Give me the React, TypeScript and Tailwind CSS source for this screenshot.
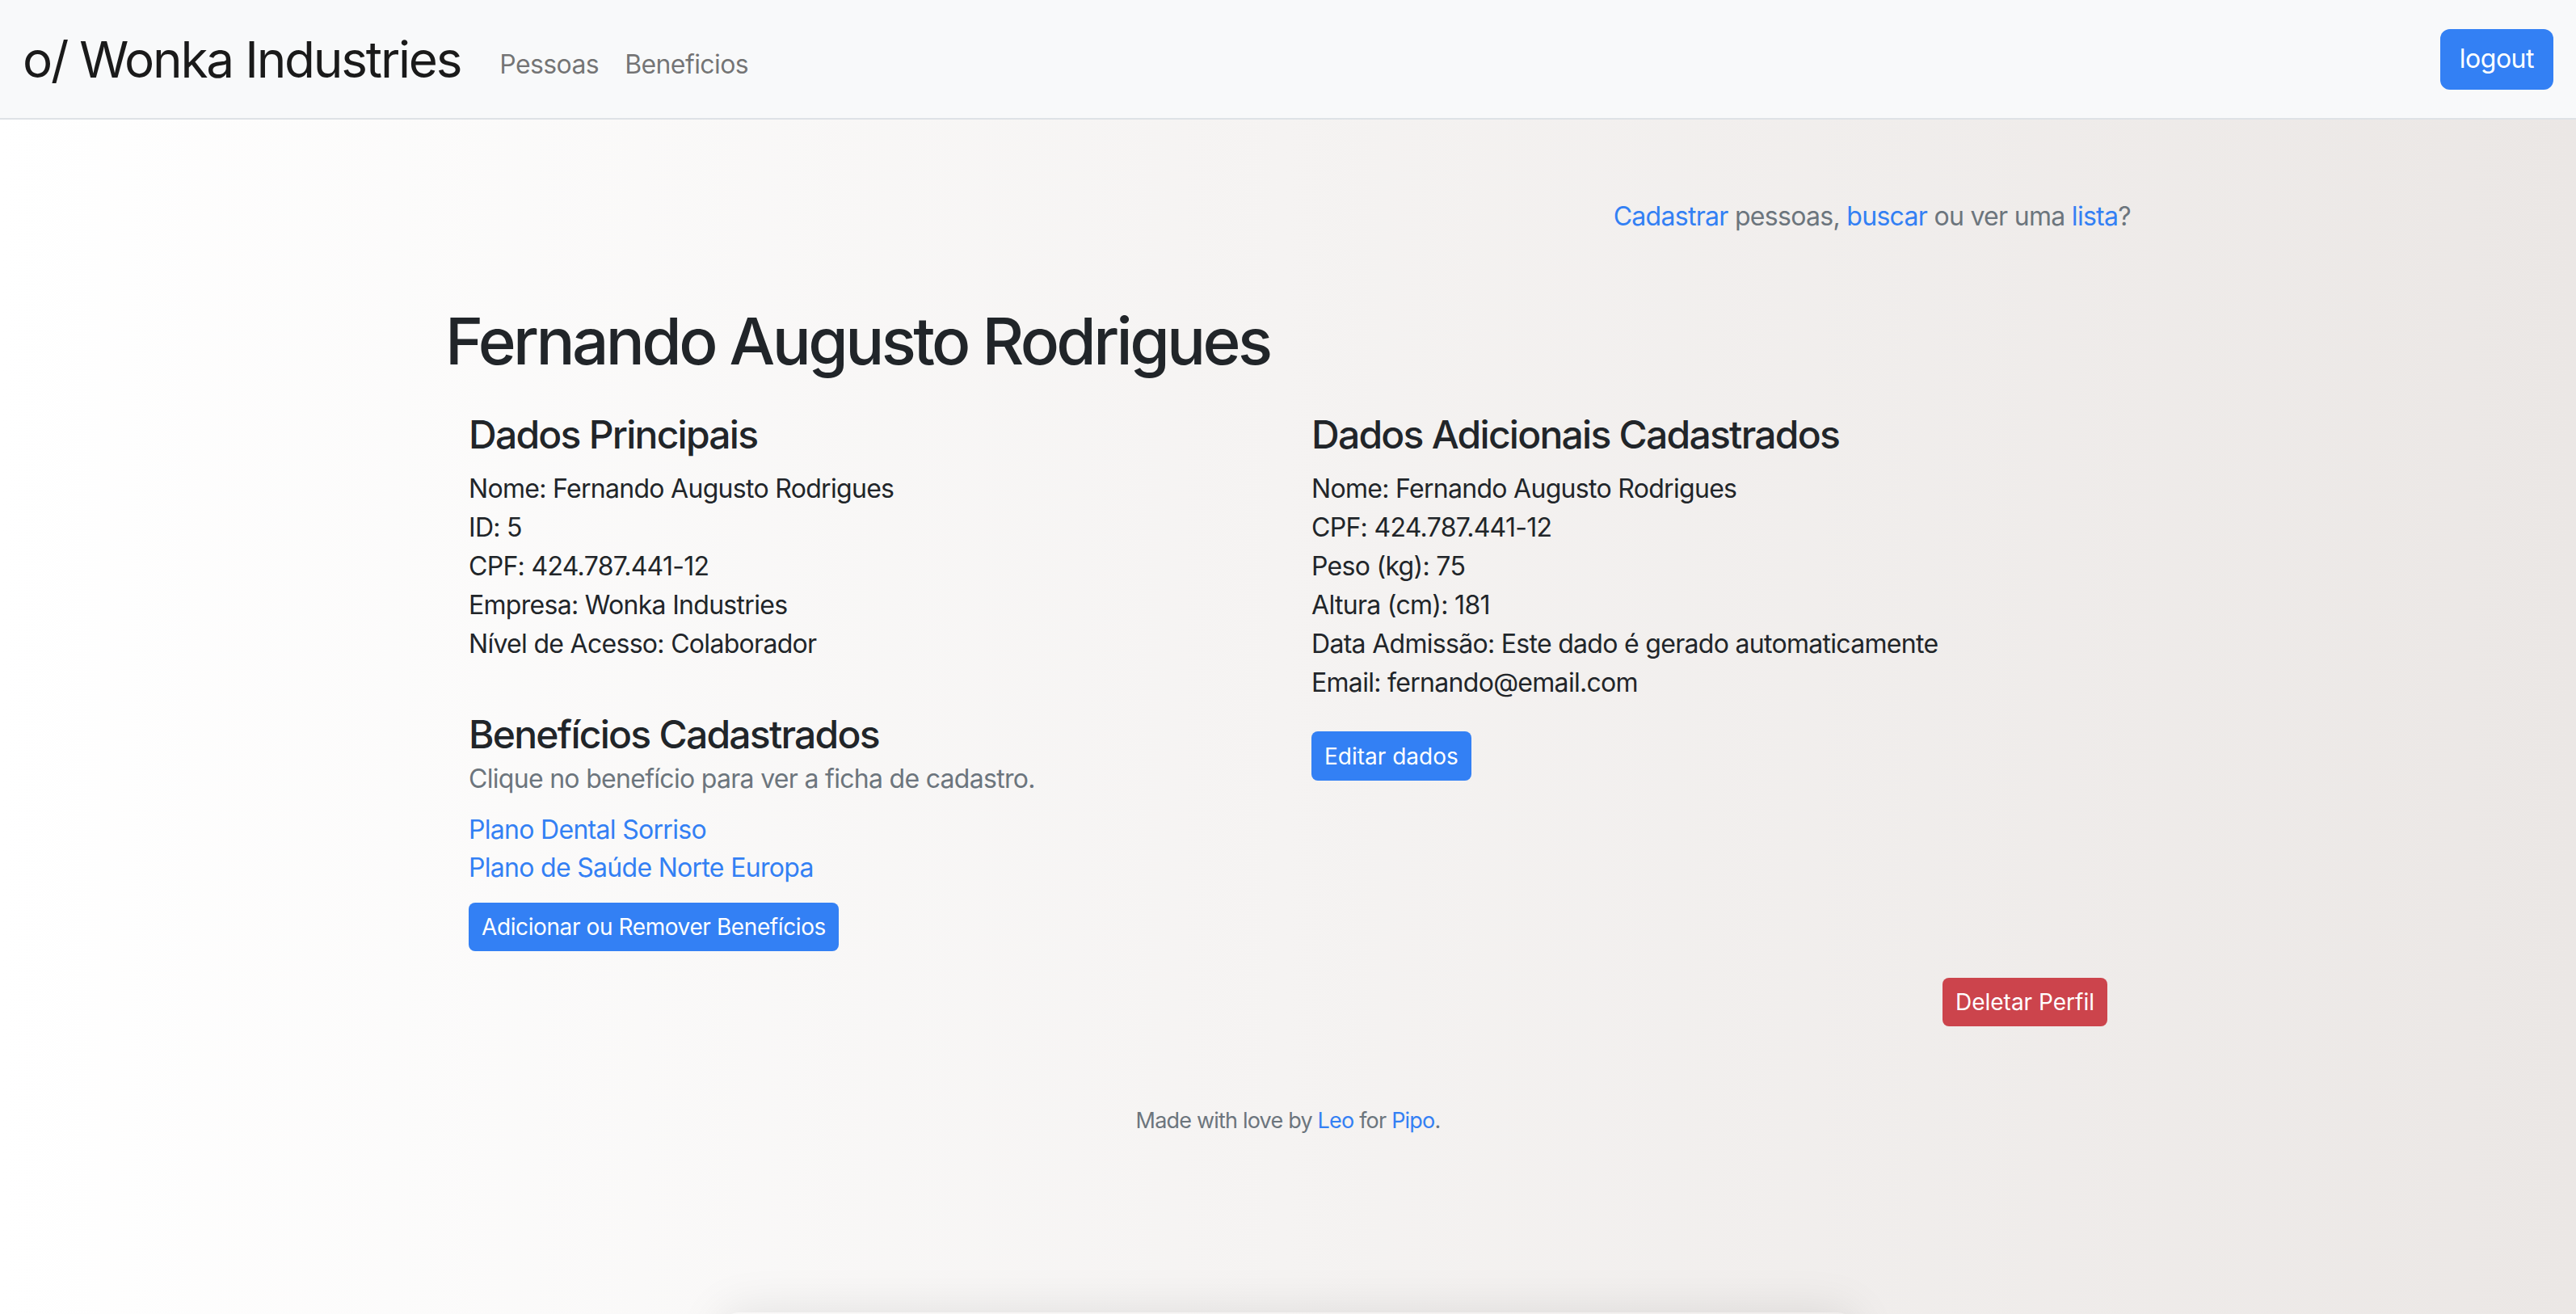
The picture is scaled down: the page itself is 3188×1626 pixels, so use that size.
const Navbar = () => {
  return (
    <nav className="flex items-center justify-between h-[148px] px-[28px] bg-[#f8f9fa] border-b-2 border-[#dee2e6]">
      <div className="flex items-center">
        <a className="text-[62px] leading-[1.5] text-[#1a1a1a] tracking-[-2.2px] mr-[48px]">o/ Wonka Industries</a>
        <div className="flex items-center gap-[32px] mt-[14px] text-[32px] tracking-[-0.6px] text-[#000000]/55">
          <a>Pessoas</a>
          <a>Beneficios</a>
        </div>
      </div>
      <button className="h-[75px] px-[24px] rounded-[12px] bg-[#3380f4] text-white text-[32px] leading-[48px] tracking-[-0.5px]">
        logout
      </button>
    </nav>
  );
};

const Info = ({ lines }: { lines: string[] }) => (
  <div className="text-[32px] leading-[48px] text-[#212529]">
    {lines.map((l) => (
      <p key={l}>{l}</p>
    ))}
  </div>
);

export default function App() {
  return (
    <div className="min-h-screen overflow-hidden bg-gradient-to-r from-[#ffffff] to-[#ebe7e5] font-['Inter',sans-serif] tracking-[-0.7px]">
      <Navbar />
      <main className="w-[2086px] mx-auto pt-[96px]">
        <p className="text-right text-[32px] leading-[48px] text-[#6c757d]">
          <a className="text-[#3380f4]">Cadastrar</a> pessoas, <a className="text-[#3380f4]">buscar</a> ou ver uma{" "}
          <a className="text-[#3380f4]">lista</a>?
        </p>
        <h1 className="mt-[82px] text-[80px] leading-[96px] font-medium text-[#212529] tracking-[-3.6px]">
          Fernando Augusto Rodrigues
        </h1>
        <div className="grid grid-cols-2 mt-[39px]">
          <div className="px-[29px]">
            <h4 className="text-[48px] leading-[58px] font-medium text-[#212529] tracking-[-1.75px] mb-[14px]">Dados Principais</h4>
            <Info
              lines={[
                "Nome: Fernando Augusto Rodrigues",
                "ID: 5",
                "CPF: 424.787.441-12",
                "Empresa: Wonka Industries",
                "Nível de Acesso: Colaborador",
              ]}
            />
            <h4 className="mt-[59px] text-[48px] leading-[58px] font-medium text-[#212529] tracking-[-1.75px]">
              Benefícios Cadastrados
            </h4>
            <p className="mt-[2px] text-[32px] leading-[48px] text-[#6c757d]">Clique no benefício para ver a ficha de cadastro.</p>
            <div className="mt-[15px] flex flex-col text-[32px] leading-[47px] text-[#3380f4]">
              <a>Plano Dental Sorriso</a>
              <a>Plano de Saúde Norte Europa</a>
            </div>
            <button className="mt-[20px] h-[60px] px-[16px] rounded-[8px] bg-[#3380f4] text-white text-[28px] leading-[42px] tracking-[-0.4px]">
              Adicionar ou Remover Benefícios
            </button>
          </div>
          <div className="px-[29px]">
            <h4 className="text-[48px] leading-[58px] font-medium text-[#212529] tracking-[-1.75px] mb-[14px]">
              Dados Adicionais Cadastrados
            </h4>
            <Info
              lines={[
                "Nome: Fernando Augusto Rodrigues",
                "CPF: 424.787.441-12",
                "Peso (kg): 75",
                "Altura (cm): 181",
                "Data Admissão: Este dado é gerado automaticamente",
                "Email: fernando@email.com",
              ]}
            />
            <button className="mt-[36px] h-[61px] px-[16px] rounded-[8px] bg-[#3380f4] text-white text-[28px] leading-[42px] tracking-[0px]">
              Editar dados
            </button>
          </div>
        </div>
        <div className="flex justify-end px-[29px] mt-[33px]">
          <button className="h-[60px] px-[16px] rounded-[8px] bg-[#cc444c] text-white text-[28px] leading-[42px] tracking-[0px]">
            Deletar Perfil
          </button>
        </div>
        <p className="mt-[96px] text-center text-[27px] leading-[42px] tracking-[-0.8px] text-[#6c757d]">
          Made with love by <a className="text-[#3380f4]">Leo</a> for <a className="text-[#3380f4]">Pipo</a>.
        </p>
      </main>
      <div className="mt-[216px] mx-auto w-[1400px] h-[120px] rounded-[20px] shadow-[0_0_60px_rgba(0,0,0,0.10)]"></div>
    </div>
  );
}
